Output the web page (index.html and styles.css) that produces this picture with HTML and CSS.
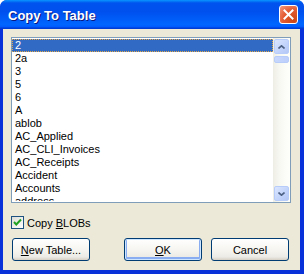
FILE: index.html
```html
<!DOCTYPE html>
<html>
  <head>
    <title>Copy To Table</title>
    <link rel="stylesheet" href="styles.css">
  </head>
  <body>
    <div class="window">
      <div class="titlebar">
        <span class="title">Copy To Table</span>
        <span class="close">
          <svg width="11" height="11" viewBox="0 0 11 11">
            <path d="M1.5 1.5 L9.5 9.5 M9.5 1.5 L1.5 9.5" stroke="#fff" stroke-width="2" stroke-linecap="square" />
          </svg>
        </span>
      </div>

      <div class="content">
        <div class="listbox">
          <ul class="items">
            <li class="selected">2</li>
            <li>2a</li>
            <li>3</li>
            <li>5</li>
            <li>6</li>
            <li>A</li>
            <li>ablob</li>
            <li>AC_Applied</li>
            <li>AC_CLI_Invoices</li>
            <li>AC_Receipts</li>
            <li>Accident</li>
            <li>Accounts</li>
            <li>address</li>
          </ul>
          <div class="scrollbar">
            <div class="sb-button">
              <svg width="7" height="4" viewBox="0 0 7 4">
                <path d="M0.5 3.5 L3.5 0.8 L6.5 3.5" stroke="#4d6185" stroke-width="1.6" fill="none" />
              </svg>
            </div>
            <div class="sb-thumb"></div>
            <div class="sb-track"></div>
            <div class="sb-button">
              <svg width="7" height="4" viewBox="0 0 7 4">
                <path d="M0.5 0.5 L3.5 3.2 L6.5 0.5" stroke="#4d6185" stroke-width="1.6" fill="none" />
              </svg>
            </div>
          </div>
        </div>

        <label class="check-row">
          <span class="checkbox">
            <svg width="9" height="9" viewBox="0 0 9 9">
              <path d="M1 4 L3.3 6.5 L8 1.5" stroke="#21a121" stroke-width="2" fill="none" />
            </svg>
          </span>
          <span>Copy <u>B</u>LOBs</span>
        </label>

        <div class="buttons">
          <button class="btn"><u>N</u>ew Table...</button>
          <span class="spacer"></span>
          <button class="btn default"><u>O</u>K</button>
          <button class="btn">Cancel</button>
        </div>
      </div>
    </div>
  </body>
</html>
```

FILE: styles.css
```css
body {
  margin: 0;
  background: #fff;
  font-family: "Liberation Sans", Arial, sans-serif;
  font-size: 11px;
}
.window {
  width: 304px;
  height: 274px;
  display: flex;
  flex-direction: column;
  border-radius: 7px 7px 0 0;
  overflow: hidden;
  background: #0831d9;
}
.titlebar {
  height: 29px;
  flex: none;
  display: flex;
  align-items: center;
  padding: 0 6px 0 8px;
  background: linear-gradient(#0997ff, #0053ee 10%, #0050ee 40%, #0066ff 85%, #005bff 92%, #003dd7 97%, #003dd7);
}
.title {
  flex: 1;
  color: #fff;
  font-weight: bold;
  font-size: 13px;
  text-shadow: 1px 1px #0a1883;
  padding-top: 1px;
}
.close {
  width: 19px;
  height: 19px;
  box-sizing: border-box;
  border: 1px solid #fff;
  border-radius: 3px;
  background: radial-gradient(circle at 80% 85%, #cc4614, #e45c33 55%, #f39b81);
  display: flex;
  align-items: center;
  justify-content: center;
}
.content {
  flex: 1;
  margin: 0 4px 4px 3px;
  background: #ece9d8;
  padding: 8px 9px 9px 8px;
  display: flex;
  flex-direction: column;
}
.listbox {
  height: 166px;
  box-sizing: border-box;
  border: 1px solid #7f9db9;
  background: #fff;
  display: flex;
  padding: 1px 0 1px 0;
}
.items {
  list-style: none;
  margin: 0;
  padding: 0;
  flex: 1;
  overflow: hidden;
}
.items li {
  height: 13px;
  line-height: 13px;
  padding-left: 3px;
  color: #000;
  white-space: nowrap;
}
.items li.selected {
  background: #316ac5;
  color: #fff;
  outline: 1px dotted #e2a84a;
  outline-offset: -1px;
}
.scrollbar {
  width: 17px;
  flex: none;
  display: flex;
  flex-direction: column;
  background: linear-gradient(to right, #eeede5, #f8f8f3 40%, #fefefb);
  margin-top: -1px;
  margin-bottom: -1px;
}
.sb-button {
  height: 15px;
  margin: 1px;
  box-sizing: border-box;
  border: 1px solid #b8ccf9;
  border-radius: 2px;
  background: linear-gradient(135deg, #dbe6ff, #c1d3fb 60%, #b4c8f6);
  display: flex;
  align-items: center;
  justify-content: center;
}
.sb-thumb {
  height: 7px;
  margin: 1px;
  box-sizing: border-box;
  border: 1px solid #b8ccf9;
  border-radius: 2px;
  background: linear-gradient(to right, #c8d7fc, #bccffb);
}
.sb-track {
  flex: 1;
}
.check-row {
  display: flex;
  align-items: center;
  gap: 3px;
  margin-top: 13px;
  height: 13px;
}
.checkbox {
  width: 13px;
  height: 13px;
  box-sizing: border-box;
  border: 1px solid #1c5180;
  background: linear-gradient(135deg, #dcdcd7, #fff);
  display: flex;
  align-items: center;
  justify-content: center;
}
.buttons {
  display: flex;
  gap: 9px;
  margin-top: 9px;
  padding-left: 1px;
  padding-right: 2px;
}
.spacer {
  flex: 1;
}
.btn {
  width: 78px;
  height: 23px;
  border: 1px solid #003c74;
  border-radius: 3px;
  background: linear-gradient(#fff, #f4f3ee 60%, #ecebe6 85%, #d6d0c5);
  font-family: "Liberation Sans", Arial, sans-serif;
  font-size: 11px;
  color: #000;
  padding: 0;
}
.btn.default {
  box-shadow: inset 0 0 0 1px #cee7ff, inset 0 -1px 0 2px #89adf0;
}
```
